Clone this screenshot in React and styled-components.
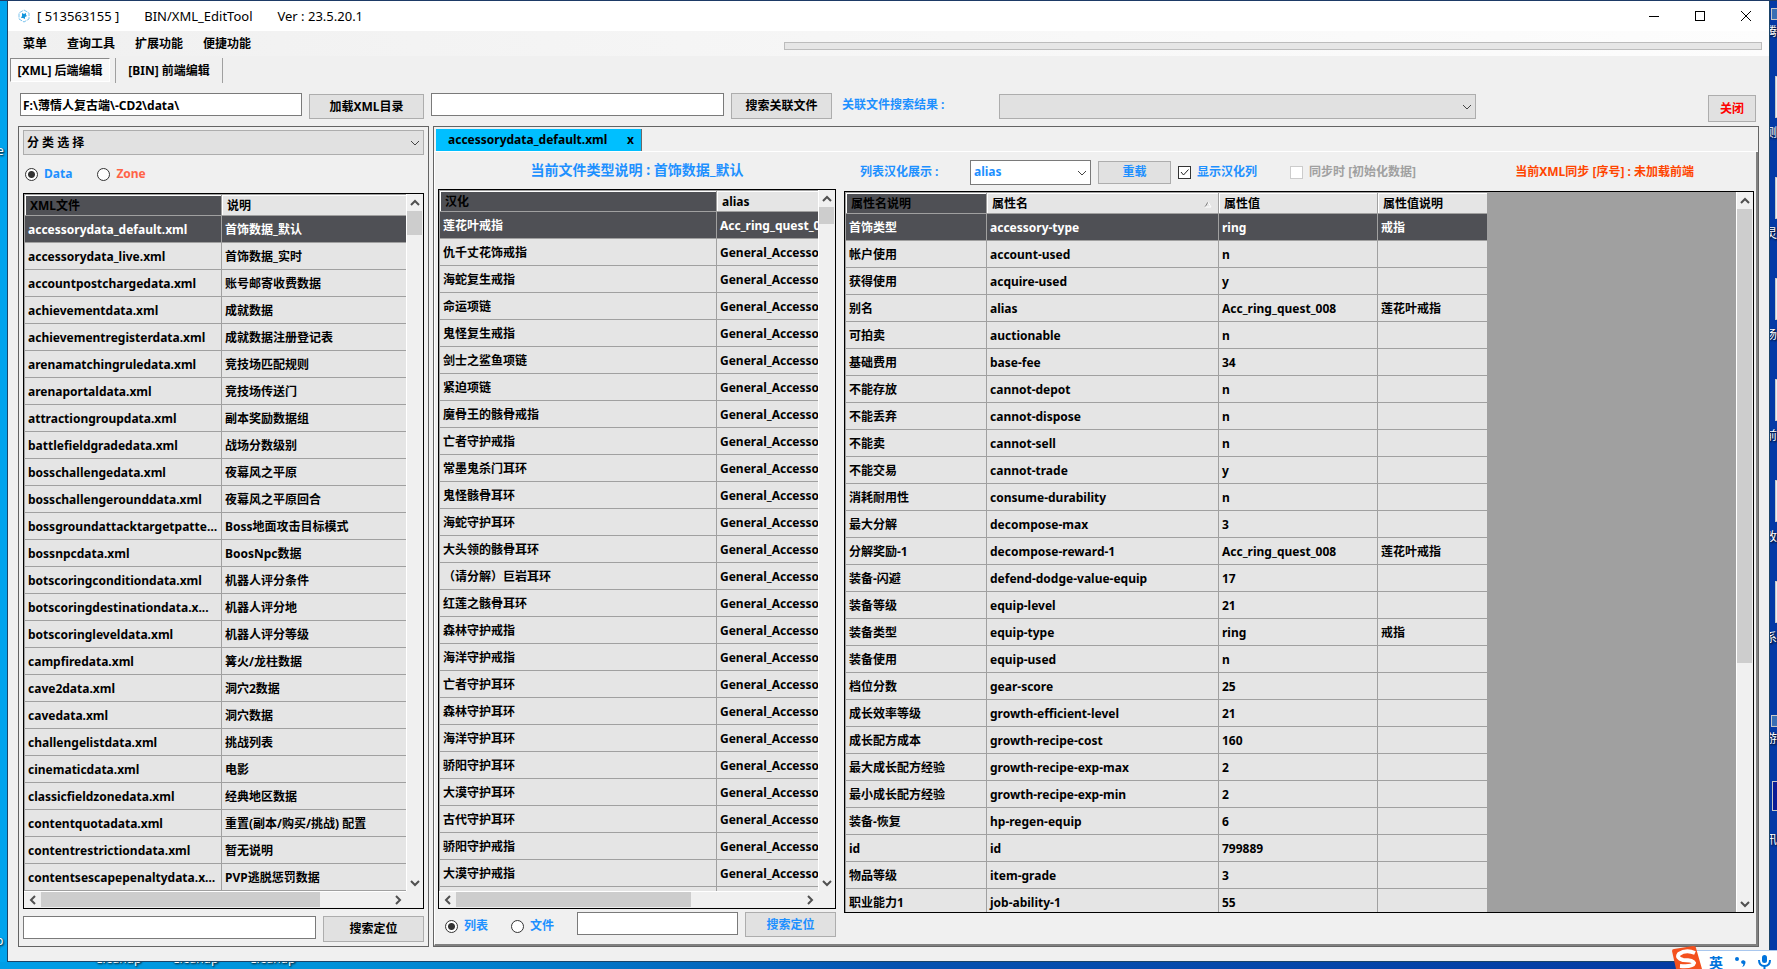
import React, { useState } from 'react'
import styled, { createGlobalStyle } from 'styled-components'

const azul = '#1e90ff'

const GlobalStyle = createGlobalStyle`
* {
  box-sizing: border-box;
}
body {
  margin: 0;
  overflow: hidden;
}
body, button, input, select {
  font-family: "Noto Sans", "Noto Sans CJK SC", sans-serif;
  font-size: 12px;
  font-weight: 700;
  line-height: 16px;
  color: #000;
}
`

/* ---------- desktop ---------- */

const Desktop = styled.div`
position: relative;
display: grid;
grid-template-columns: 7px minmax(0, 1fr) 7px;
grid-template-rows: 1px minmax(0, 1fr) 7px;
height: 100vh;
overflow: hidden;
background: linear-gradient(100deg, #00a4ee 0%, #0093da 25%, #0552b0 55%, #0439a2 100%);
`

const Wallpaper = styled.div`
grid-column: 1 / -1;
height: 1px;
background: #1d3a66;
`

const Side = styled.div`
position: relative;
overflow: hidden;
background: ${props => props.$right ? '#0439a6' : '#00a4ee'};
`

const Bottom = styled.div`
grid-column: 1 / -1;
position: relative;
overflow: hidden;
`

const DesktopLabel = styled.span`
position: absolute;
top: ${props => props.$top}px;
left: ${props => props.$left}px;
font-size: 12px;
font-weight: 400;
white-space: nowrap;
color: #fff;
text-shadow: 1px 1px 2px #000;
`

const DesktopIcon = styled.span`
position: absolute;
top: ${props => props.$top}px;
left: ${props => props.$left}px;
width: 40px;
height: ${props => props.$height}px;
border: 1px solid #c8c8c8;
background: ${props => props.$fill || '#e8eef8'};
`

const ImeBar = styled.div`
position: absolute;
right: 0;
bottom: 0;
display: flex;
gap: 11px;
align-items: flex-start;
height: 19px;
width: 90px;
padding: 4px 6px 0 22px;
overflow: hidden;
border-top: 1px solid #a9c7ee;
background: #fff;
color: #0073dc;
font-size: 14px;
`

const ImeLogo = styled.svg`
position: absolute;
right: 74px;
bottom: 0;
width: 34px;
height: 23px;
`

/* ---------- window ---------- */

const Window = styled.div`
display: flex;
flex-direction: column;
min-height: 0;
border: solid #1b4468;
border-width: 0 1px 1px;
background: #f0f0f0;
`

const TitleBar = styled.header`
display: flex;
align-items: center;
height: 30px;
flex: none;
padding-left: 10px;
background: #fff;
font-size: 13px;
font-weight: 400;
`

const TitleText = styled.span`
margin-left: ${props => props.$first ? 7 : 25}px;
white-space: pre;
`

const WindowButtons = styled.div`
display: flex;
margin-left: auto;
`

const WindowButton = styled.button`
display: flex;
align-items: center;
justify-content: center;
width: 46px;
height: 30px;
padding: 0;
border: 0;
background: none;
&:hover {
  background: #e5e5e5;
}
`

const MenuBar = styled.nav`
display: flex;
align-items: center;
gap: 20px;
flex: none;
height: 25px;
padding: 0 7px 0 15px;
background: linear-gradient(90deg, #f0f0f0, #fdfdfd);
`

const MenuItem = styled.button`
padding: 0;
border: 0;
background: none;
`

const Progress = styled.div`
width: 978px;
max-width: 60%;
height: 8px;
margin: 5px 0 0 auto;
border: 1px solid #bcbcbc;
background: #e6e6e6;
`

const ToolStrip = styled.div`
display: flex;
align-items: center;
flex: none;
height: 28px;
padding-left: 2px;
`

const StripButton = styled.button`
min-width: ${props => props.$active ? 100 : 106}px;
height: 24px;
padding: 1px 4px 0;
border: 1px solid transparent;
background: none;
${props => props.$active && `
border-color: #8a8a8a #fff #fff #8a8a8a;
background: #f8f8f8;
`}
`

const StripLine = styled.span`
width: 1px;
height: 25px;
margin-left: ${props => props.$gap}px;
background: #a0a0a0;
`

const PathBar = styled.div`
display: flex;
align-items: flex-end;
flex: none;
height: 42px;
padding: 0 13px 7px 12px;
`

const TextInput = styled.input`
flex: none;
width: ${props => props.$width}px;
height: 23px;
margin: 0 7px 3px 0;
padding: 0 2px;
border: 1px solid #7a7a7a;
background: #fff;
outline: 0;
`

const Button = styled.button`
flex: none;
width: ${props => props.$width}px;
height: ${props => props.$height || 25}px;
padding: 0;
border: 1px solid #adadad;
background: #e1e1e1;
color: ${props => props.$color || '#000'};
&:hover {
  border-color: #0078d7;
  background: #e5f1fb;
}
`

const LoadButton = styled(Button)`
margin-right: 7px;
`

const ReloadButton = styled(Button)`
margin: 0 7px;
`

const CloseFile = styled(Button)`
margin: 0 0 -3px auto;
`

const BlueLabel = styled.label`
width: ${props => props.$width}px;
color: ${azul};
`

const ResultLabel = styled(BlueLabel)`
margin: 0 0 6px 10px;
`

const SelectBox = styled.div`
position: relative;
flex: none;
width: ${props => props.$width};
height: 25px;
`

const SelectField = styled.select`
width: 100%;
height: 25px;
padding: 0 20px 0 3px;
appearance: none;
border: 1px solid ${props => props.$white ? '#7a7a7a' : '#adadad'};
border-radius: 0;
background: ${props => props.$white ? '#fff' : '#e1e1e1'};
color: ${props => props.$white ? azul : '#000'};
outline: 0;
`

const SelectArrow = styled.svg`
position: absolute;
top: 10px;
right: 4px;
pointer-events: none;
`

/* ---------- panels ---------- */

const Main = styled.main`
display: grid;
grid-template-columns: 411px minmax(0, 1fr);
gap: 4px;
flex: 1;
min-height: 0;
padding: 0 10px 14px;
`

const LeftPanel = styled.section`
display: flex;
flex-direction: column;
min-height: 0;
padding: 3px 4px 4px;
border: 1px solid #646464;
`

const RadioRow = styled.div`
display: flex;
align-items: center;
flex: none;
height: ${props => props.$height}px;
padding-left: ${props => props.$indent}px;
`

const Choice = styled.label`
display: flex;
align-items: center;
flex: none;
margin-right: ${props => props.$gap || 0}px;
color: ${props => props.$color || azul};
white-space: nowrap;
`

const Radio = styled.input`
appearance: none;
width: 13px;
height: 13px;
margin: 0 6px 0 0;
border: 1px solid #333;
border-radius: 50%;
background: #fff;
&:checked {
  background: radial-gradient(circle, #333 0 3px, #fff 4px);
}
`

const CheckWrap = styled.span`
position: relative;
width: 13px;
height: 13px;
margin-right: 6px;
`

const Check = styled.input`
display: block;
appearance: none;
width: 13px;
height: 13px;
margin: 0;
border: 1px solid #333;
background: #fff;
&:disabled {
  border-color: #ccc;
}
`

const CheckMark = styled.svg`
position: absolute;
inset: 0;
pointer-events: none;
`

const Footer = styled.div`
display: flex;
align-items: flex-start;
flex: none;
padding-top: ${props => props.$top}px;
`

const RightPanel = styled.section`
display: flex;
flex-direction: column;
min-height: 0;
border: 1px solid #646464;
`

const FileTabs = styled.div`
display: flex;
align-items: flex-end;
flex: none;
height: 25px;
padding-left: 2px;
border-bottom: 1px solid #fff;
`

const FileTab = styled.div`
display: flex;
align-items: center;
justify-content: space-between;
width: 206px;
height: 22px;
padding: 0 7px 0 12px;
border-right: 1px solid #696969;
background: #00bfff;
`

const TabClose = styled.button`
padding: 0;
border: 0;
background: none;
`

const TabPage = styled.div`
display: grid;
grid-template-columns: 398px minmax(0, 1fr);
gap: 8px;
flex: 1;
min-height: 0;
padding: 0 2px 0 3px;
border: solid;
border-width: 0 2px 2px 1px;
border-color: #fff #808080 #808080 #fff;
`

const Column = styled.div`
display: flex;
flex-direction: column;
min-width: 0;
min-height: 0;
padding-bottom: ${props => props.$bottom}px;
`

const FileTitle = styled.h2`
flex: none;
height: 37px;
margin: 0;
text-align: center;
font-size: 14px;
font-weight: 700;
line-height: 36px;
color: ${azul};
`

const ListTools = styled.div`
display: flex;
align-items: center;
flex: none;
height: 39px;
padding: 1px 60px 0 16px;
`

const SyncState = styled.span`
margin-left: auto;
color: #ff4500;
white-space: nowrap;
`

/* ---------- data grid ---------- */

const GridFrame = styled.div`
display: grid;
grid-template-columns: minmax(0, 1fr) 17px;
grid-template-rows: minmax(0, 1fr) auto;
flex: 1;
min-height: 0;
border: 1px solid #000;
background: #f0f0f0;
`

const GridBody = styled.div`
overflow: hidden;
padding: 1px 0 0 1px;
background: #a0a0a0;
`

const Table = styled.table`
width: ${props => props.$width}px;
table-layout: fixed;
border-collapse: separate;
border-spacing: 0;
`

const Th = styled.th`
height: 21px;
padding: 2px 6px 0 5px;
border: solid #a0a0a0;
border-width: 0 1px 1px 0;
box-shadow: inset 1px 1px 0 #fff;
background: ${props => props.$dark ? '#4f5055' : '#e5e5e5'};
text-align: left;
`

const ThInner = styled.span`
display: flex;
align-items: center;
justify-content: space-between;
`

const Tr = styled.tr`
background: ${props => props.$selected ? '#4f5055' : '#e5e5e5'};
color: ${props => props.$selected ? '#fff' : '#000'};
`

const Td = styled.td`
height: 27px;
padding: 2px 3px 0;
border: solid #a0a0a0;
border-width: 0 1px 1px 0;
overflow: hidden;
text-overflow: ellipsis;
white-space: pre;
`

const VBar = styled.div`
display: flex;
flex-direction: column;
border-left: 1px solid #fff;
`

const HBar = styled.div`
display: flex;
height: 17px;
padding-bottom: 1px;
border-top: 1px solid #fff;
`

const BarButton = styled.button`
display: flex;
align-items: center;
justify-content: center;
flex: none;
width: ${props => props.$side ? 17 : 15}px;
height: ${props => props.$side ? 15 : 17}px;
margin-left: ${props => props.$side === 'end' ? 'auto' : 0};
margin-top: ${props => props.$bottom ? 'auto' : 0};
padding: 0;
border: 0;
background: none;
`

const VThumb = styled.div`
width: 15px;
height: ${props => props.$size};
background: #cdcdcd;
`

const HThumb = styled.div`
width: ${props => props.$size};
background: #cdcdcd;
`

const arquivos = [
  ['accessorydata_default.xml', '首饰数据_默认'],
  ['accessorydata_live.xml', '首饰数据_实时'],
  ['accountpostchargedata.xml', '账号邮寄收费数据'],
  ['achievementdata.xml', '成就数据'],
  ['achievementregisterdata.xml', '成就数据注册登记表'],
  ['arenamatchingruledata.xml', '竞技场匹配规则'],
  ['arenaportaldata.xml', '竞技场传送门'],
  ['attractiongroupdata.xml', '副本奖励数据组'],
  ['battlefieldgradedata.xml', '战场分数级别'],
  ['bosschallengedata.xml', '夜幕风之平原'],
  ['bosschallengerounddata.xml', '夜幕风之平原回合'],
  ['bossgroundattacktargetpatterndata.xml', 'Boss地面攻击目标模式'],
  ['bossnpcdata.xml', 'BoosNpc数据'],
  ['botscoringconditiondata.xml', '机器人评分条件'],
  ['botscoringdestinationdata.x...', '机器人评分地'],
  ['botscoringleveldata.xml', '机器人评分等级'],
  ['campfiredata.xml', '篝火/龙柱数据'],
  ['cave2data.xml', '洞穴2数据'],
  ['cavedata.xml', '洞穴数据'],
  ['challengelistdata.xml', '挑战列表'],
  ['cinematicdata.xml', '电影'],
  ['classicfieldzonedata.xml', '经典地区数据'],
  ['contentquotadata.xml', '重置(副本/购买/挑战) 配置'],
  ['contentrestrictiondata.xml', '暂无说明'],
  ['contentsescapepenaltydata.xml', 'PVP逃脱惩罚数据'],
]

const nomes = [
  '莲花叶戒指', '仇千丈花饰戒指', '海蛇复生戒指', '命运项链', '鬼怪复生戒指',
  '剑士之鲨鱼项链', '紧迫项链', '魔骨王的骸骨戒指', '亡者守护戒指', '常墨鬼杀门耳环',
  '鬼怪骸骨耳环', '海蛇守护耳环', '大头领的骸骨耳环', '（请分解）巨岩耳环', '红莲之骸骨耳环',
  '森林守护戒指', '海洋守护戒指', '亡者守护耳环', '森林守护耳环', '海洋守护耳环',
  '骄阳守护耳环', '大漠守护耳环', '古代守护耳环', '骄阳守护戒指', '大漠守护戒指', '',
]

const itens = nomes.map((nome, i) => [
  nome,
  i === 0 ? 'Acc_ring_quest_008' : nome && 'General_Accessory_Ring',
])

const atributos = [
  ['首饰类型', 'accessory-type', 'ring', '戒指'],
  ['帐户使用', 'account-used', 'n', ''],
  ['获得使用', 'acquire-used', 'y', ''],
  ['别名', 'alias', 'Acc_ring_quest_008', '莲花叶戒指'],
  ['可拍卖', 'auctionable', 'n', ''],
  ['基础费用', 'base-fee', '34', ''],
  ['不能存放', 'cannot-depot', 'n', ''],
  ['不能丢弃', 'cannot-dispose', 'n', ''],
  ['不能卖', 'cannot-sell', 'n', ''],
  ['不能交易', 'cannot-trade', 'y', ''],
  ['消耗耐用性', 'consume-durability', 'n', ''],
  ['最大分解', 'decompose-max', '3', ''],
  ['分解奖励-1', 'decompose-reward-1', 'Acc_ring_quest_008', '莲花叶戒指'],
  ['装备-闪避', 'defend-dodge-value-equip', '17', ''],
  ['装备等级', 'equip-level', '21', ''],
  ['装备类型', 'equip-type', 'ring', '戒指'],
  ['装备使用', 'equip-used', 'n', ''],
  ['档位分数', 'gear-score', '25', ''],
  ['成长效率等级', 'growth-efficient-level', '21', ''],
  ['成长配方成本', 'growth-recipe-cost', '160', ''],
  ['最大成长配方经验', 'growth-recipe-exp-max', '2', ''],
  ['最小成长配方经验', 'growth-recipe-exp-min', '2', ''],
  ['装备-恢复', 'hp-regen-equip', '6', ''],
  ['id', 'id', '799889', ''],
  ['物品等级', 'item-grade', '3', ''],
  ['职业能力1', 'job-ability-1', '55', ''],
]

const paths = {
  up: 'M1 7 L5 3 L9 7',
  down: 'M1 3 L5 7 L9 3',
  left: 'M7 1 L3 5 L7 9',
  right: 'M3 1 L7 5 L3 9',
}

const Arrow = ({ dir }) => (
  <svg width="10" height="10" viewBox="0 0 10 10" fill="none" stroke="#505050" strokeWidth="2">
    <path d={paths[dir]} />
  </svg>
)

const Select = ({ id, width, white, label, options }) => (
  <SelectBox $width={width}>
    <SelectField id={id} $white={white} aria-label={label}>
      {options.map(o => <option key={o}>{o}</option>)}
    </SelectField>
    <SelectArrow width="10" height="6" viewBox="0 0 10 6" fill="none" stroke="#444">
      <path d="M1 1 L5 5 L9 1" />
    </SelectArrow>
  </SelectBox>
)

const DataGrid = ({ columns, widths, rows, sorted, vThumb, hThumb }) => {
  const [selected, setSelected] = useState(0)
  return (
    <GridFrame>
      <GridBody>
        <Table $width={widths.reduce((a, b) => a + b, 0)}>
          <colgroup>
            {widths.map((w, i) => <col key={i} width={w} />)}
          </colgroup>
          <thead>
            <tr>
              {columns.map((c, i) => (
                <Th key={c} $dark={i === 0}>
                  <ThInner>
                    {c}
                    {sorted === i && (
                      <svg width="8" height="7" viewBox="0 0 8 7" fill="none">
                        <path d="M1 6 L4 1" stroke="#808080" />
                        <path d="M4 1 L7 6 H1" stroke="#fff" />
                      </svg>
                    )}
                  </ThInner>
                </Th>
              ))}
            </tr>
          </thead>
          <tbody>
            {rows.map((r, i) => (
              <Tr key={i} $selected={selected === i} onClick={() => setSelected(i)}>
                {r.map((v, j) => <Td key={j}>{v}</Td>)}
              </Tr>
            ))}
          </tbody>
        </Table>
      </GridBody>
      <VBar>
        <BarButton aria-label="向上"><Arrow dir="up" /></BarButton>
        <VThumb $size={vThumb} />
        <BarButton aria-label="向下" $bottom><Arrow dir="down" /></BarButton>
      </VBar>
      {hThumb && (
        <HBar>
          <BarButton aria-label="向左" $side="start"><Arrow dir="left" /></BarButton>
          <HThumb $size={hThumb} />
          <BarButton aria-label="向右" $side="end"><Arrow dir="right" /></BarButton>
        </HBar>
      )}
    </GridFrame>
  )
}

const Header = () => (
  <TitleBar>
    <svg width="12" height="14" viewBox="0 0 12 14" fill="none">
      <path d="M6 1 L11 4 V10 L6 13 L1 10 V4 Z" stroke="#7cc4ee" strokeDasharray="4 1" />
      <path d="M4 4 L6 5 L8 4 L8 6 L9 7 L7 8 L7 10 L5 9 L3 9 L4 7 Z" fill="#1496dc" />
    </svg>
    <TitleText $first>[ 513563155 ]</TitleText>
    <TitleText>BIN/XML_EditTool</TitleText>
    <TitleText>Ver : 23.5.20.1</TitleText>
    <WindowButtons>
      <WindowButton aria-label="最小化">
        <svg width="10" height="10"><path d="M0 5.5 H10" stroke="#000" /></svg>
      </WindowButton>
      <WindowButton aria-label="最大化">
        <svg width="10" height="10"><rect x="0.5" y="0.5" width="9" height="9" fill="none" stroke="#000" /></svg>
      </WindowButton>
      <WindowButton aria-label="关闭窗口">
        <svg width="10" height="10"><path d="M0 0 L10 10 M10 0 L0 10" stroke="#000" /></svg>
      </WindowButton>
    </WindowButtons>
  </TitleBar>
)

const FilePanel = () => (
  <LeftPanel>
    <Select width="100%" label="分类选择" options={['分 类 选 择']} />
    <RadioRow $height={38} $indent={2}>
      <Choice $gap={25}><Radio type="radio" name="origem" defaultChecked />Data</Choice>
      <Choice $color="#ff6347"><Radio type="radio" name="origem" />Zone</Choice>
    </RadioRow>
    <DataGrid
      columns={['XML文件', '说明']}
      widths={[197, 280]}
      rows={arquivos}
      vThumb="24px"
      hThumb="73%"
    />
    <Footer $top={7}>
      <TextInput $width={293} aria-label="搜索文件" />
      <Button $width={101} $height={26}>搜索定位</Button>
    </Footer>
  </LeftPanel>
)

const ListPanel = () => (
  <Column $bottom={4}>
    <FileTitle>当前文件类型说明 : 首饰数据_默认</FileTitle>
    <DataGrid
      columns={['汉化', 'alias']}
      widths={[277, 200]}
      rows={itens}
      vThumb="17px"
      hThumb="62%"
    />
    <Footer $top={3}>
      <RadioRow $height={28} $indent={7}>
        <Choice $gap={23}><Radio type="radio" name="modo" defaultChecked />列表</Choice>
        <Choice $gap={23}><Radio type="radio" name="modo" />文件</Choice>
      </RadioRow>
      <TextInput $width={161} aria-label="搜索内容" />
      <Button $width={91} $color={azul}>搜索定位</Button>
    </Footer>
  </Column>
)

const DetailPanel = () => (
  <Column $bottom={31}>
    <ListTools>
      <BlueLabel $width={110} htmlFor="coluna">列表汉化展示 :</BlueLabel>
      <Select id="coluna" width="121px" white options={['alias']} />
      <ReloadButton $width={73} $height={23} $color={azul}>重载</ReloadButton>
      <Choice $gap={33}>
        <CheckWrap>
          <Check type="checkbox" defaultChecked />
          <CheckMark width="13" height="13" fill="none" stroke="#222"><path d="M3 6 L5.500 9 L10.500 3.500" /></CheckMark>
        </CheckWrap>
        显示汉化列
      </Choice>
      <Choice $color="#a0a0a0">
        <CheckWrap><Check type="checkbox" disabled /></CheckWrap>
        同步时 [初始化数据]
      </Choice>
      <SyncState>当前XML同步 [序号] : 未加载前端</SyncState>
    </ListTools>
    <DataGrid
      columns={['属性名说明', '属性名', '属性值', '属性值说明']}
      widths={[141, 232, 159, 110]}
      rows={atributos}
      sorted={1}
      vThumb="454px"
    />
  </Column>
)

const icones = [75, 176, 277, 378, 479, 580]
const rotulos = [
  ['腾', 23], ['测', 124], ['灵', 225], ['场', 326], ['前', 427],
  ['改', 528], ['系', 629], ['游', 730], ['讯', 831],
]

const App = () => (
  <>
    <GlobalStyle />
    <Desktop>
      <Wallpaper />
      <Side>
        <DesktopLabel $top={142} $left={-3}>e</DesktopLabel>
        <DesktopLabel $top={932} $left={-4}>p</DesktopLabel>
      </Side>
      <Window>
        <Header />
        <MenuBar>
          <MenuItem>菜单</MenuItem>
          <MenuItem>查询工具</MenuItem>
          <MenuItem>扩展功能</MenuItem>
          <MenuItem>便捷功能</MenuItem>
          <Progress role="progressbar" aria-label="进度" />
        </MenuBar>
        <ToolStrip>
          <StripButton $active>[XML] 后端编辑</StripButton>
          <StripLine $gap={5} />
          <StripButton>[BIN] 前端编辑</StripButton>
          <StripLine $gap={0} />
        </ToolStrip>
        <PathBar>
          <TextInput $width={282} defaultValue="F:\薄情人复古端\-CD2\data\" aria-label="目录" />
          <LoadButton $width={115}>加载XML目录</LoadButton>
          <TextInput $width={293} aria-label="关联文件" />
          <Button $width={101} $height={26}>搜索关联文件</Button>
          <ResultLabel $width={157} htmlFor="resultado">关联文件搜索结果 :</ResultLabel>
          <Select id="resultado" width="477px" options={['']} />
          <CloseFile $width={48} $height={27} $color="#f00">关闭</CloseFile>
        </PathBar>
        <Main>
          <FilePanel />
          <RightPanel>
            <FileTabs>
              <FileTab>
                accessorydata_default.xml
                <TabClose aria-label="关闭标签">x</TabClose>
              </FileTab>
            </FileTabs>
            <TabPage>
              <ListPanel />
              <DetailPanel />
            </TabPage>
          </RightPanel>
        </Main>
      </Window>
      <Side $right>
        <DesktopIcon $top={7} $left={1} $height={12} $fill="#3a6fb4" />
        {icones.map(top => <DesktopIcon key={top} $top={top} $left={5} $height={42} />)}
        <DesktopIcon $top={714} $left={1} $height={12} $fill="#3a6fb4" />
        <DesktopIcon $top={780} $left={2} $height={30} $fill="#0c1c96" />
        {rotulos.map(([texto, top]) => <DesktopLabel key={top} $top={top} $left={-5}>{texto}</DesktopLabel>)}
      </Side>
      <Bottom>
        <DesktopLabel $top={-11} $left={95}>Cleanup</DesktopLabel>
        <DesktopLabel $top={-11} $left={172}>Cleanup</DesktopLabel>
        <DesktopLabel $top={-11} $left={249}>Cleanup</DesktopLabel>
      </Bottom>
      <ImeBar>
        <span>英</span>
        <svg width="13" height="13" viewBox="0 0 13 13" fill="#0073dc">
          <circle cx="3" cy="4" r="2" />
          <path d="M7 7 a2.300 2.300 0 1 1 4.500 1 q-0.500 3 -3.500 4 q1.500 -1.500 1.300 -3 q-2 0 -2.300 -2z" />
        </svg>
        <svg width="13" height="14" viewBox="0 0 13 14" fill="none" stroke="#0073dc" strokeWidth="2">
          <rect x="4" y="0" width="5" height="8" rx="2.500" fill="#0073dc" stroke="none" />
          <path d="M1 5 Q1 11 6.500 11 Q12 11 12 5" />
          <path d="M6.500 11 V14" />
        </svg>
      </ImeBar>
      <ImeLogo viewBox="0 0 34 23">
        <path d="M3 5 Q3 3 5 3 L24 0 Q27 0 27 2 L33 23 H7 Z" fill="#f4511e" />
        <path d="M26 7 Q17 3 10 8 Q7 12 14 14 Q24 14 25 17 Q24 21 11 20" fill="none" stroke="#fff" strokeWidth="4" />
      </ImeLogo>
    </Desktop>
  </>
)

export default App
